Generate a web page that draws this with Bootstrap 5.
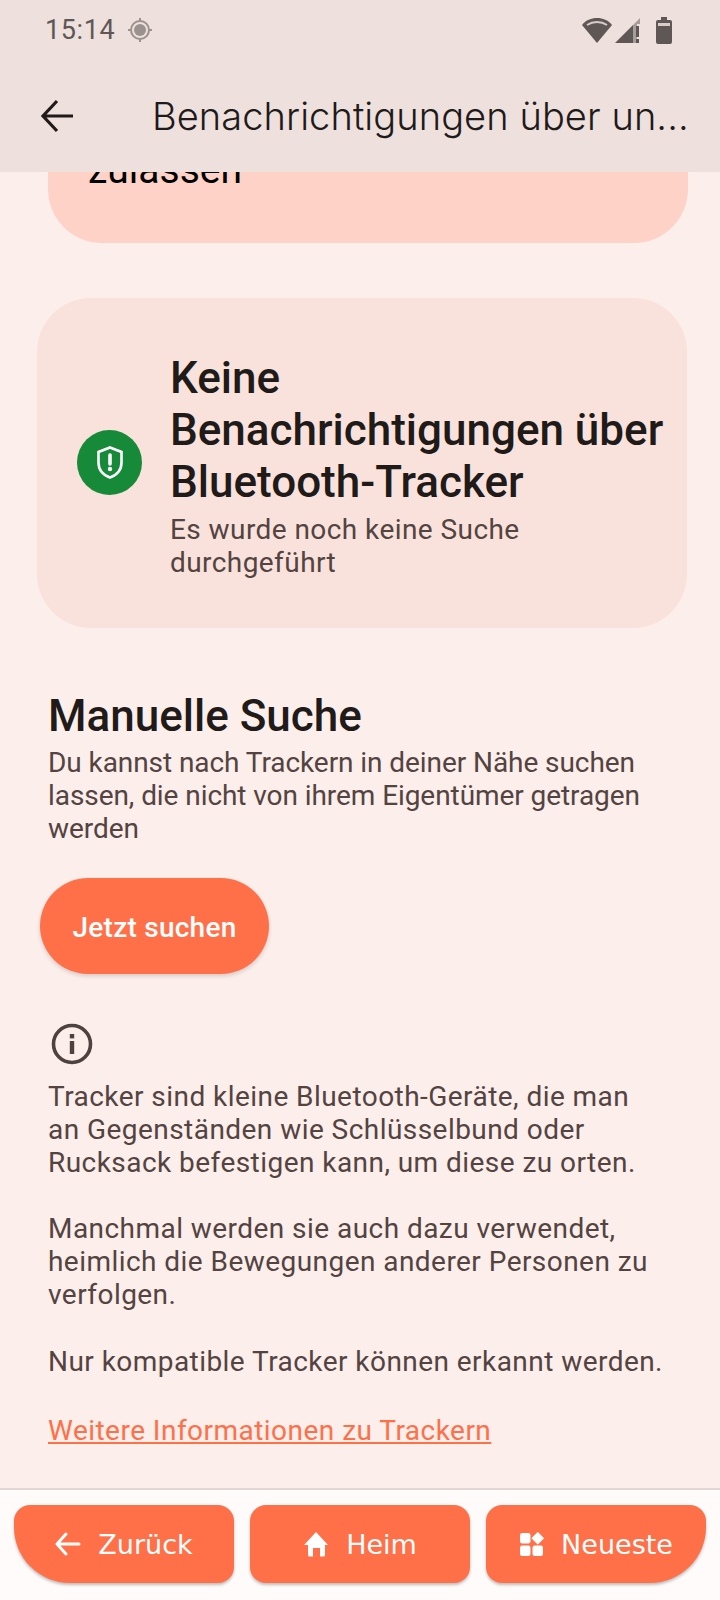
<!DOCTYPE html>
<html lang="de">
<head>
  <meta charset="UTF-8">
  <meta name="viewport" content="width=device-width, initial-scale=1.0">
  <title>Benachrichtigungen über unbekannte Tracker</title>
  <link href="https://cdn.jsdelivr.net/npm/bootstrap@5.3.0/dist/css/bootstrap.min.css" rel="stylesheet">
  <style>
    html, body { height: 1600px; overflow: hidden; }
    body { width: 720px; background: #fceeeb; font-family: Roboto, sans-serif; color: #201a19; }
    .top-bar { background: #eee0dd; height: 172px; flex: none; position: relative; z-index: 2; }
    .status-row { height: 60px; padding: 0 48px 0 45px; color: #5f5755; }
    .status-time { font-size: 27px; letter-spacing: .6px; line-height: 1; margin-right: 4px; }
    .sig-icon { margin-left: 2px; }
    .tool-row { height: 112px; padding: 0 0 0 40px; }
    .tool-title { font-family: Inter, sans-serif; font-size: 38px; font-weight: 300; letter-spacing: .08px; margin-left: 76px; white-space: nowrap; color: #201a19; }
    .scroll-area { min-height: 0; overflow: hidden; }
    .allow-card { background: #ffd2c7; margin: -60px 32px 0 48px; height: 131px; border-radius: 0 0 54px 54px; padding: 35px 0 0 40px; font-size: 39px; line-height: 46px; color: #000; }
    .state-card { background: #f9e2dc; margin: 55px 33px 0 37px; height: 330px; border-radius: 54px; padding: 0 18px 0 40px; }
    .state-icon { width: 65px; height: 65px; background: #168a38; flex: none; margin-bottom: 2px; }
    .state-title { font-size: 44px; line-height: 52px; font-weight: 500; margin: 0; color: #201a19; }
    .state-sub { font-size: 28px; line-height: 33px; letter-spacing: .43px; color: #534341; margin: 5px 0 0; }
    .state-text { margin-left: 28px; padding-top: 5px; }
    .manual-head { font-size: 44px; line-height: 52px; font-weight: 500; margin: 62px 0 4px 48px; color: #201a19; }
    .manual-text { font-size: 28px; line-height: 33px; letter-spacing: -.07px; color: #534341; margin: 0 0 0 48px; }
    .body-text { font-size: 28px; line-height: 33.1px; letter-spacing: .45px; color: #534341; margin: 0 0 0 48px; }
    .search-btn { background: #ff7049; color: #fff; border: 0; border-radius: 48px; width: 229px; height: 96px; margin: 33px 0 0 40px; padding-top: 9px; font-size: 28px; font-weight: 500; letter-spacing: .25px; box-shadow: 0 2px 4px rgba(0,0,0,.16); }
    .search-btn:hover { background: #ff7049; color: #fff; }
    .info-icon { display: block; margin: 49px 0 15px 51px; }
    .gap-para { margin-top: 33px; }
    .info-link { color: #ff7049; font-size: 28px; line-height: 33px; letter-spacing: .47px; margin: 36px 0 0 48px; display: block; }
    .bottom-bar { background: #fefbfa; border-top: 2px solid #e3d6d3; height: 112px; flex: none; padding: 15px 14px 0; gap: 16px; }
    .bottom-btn { background: #ff7049; color: #fff; border: 0; width: 220px; height: 78px; padding-left: 12px; border-radius: 16px; font-family: "DejaVu Sans", sans-serif; font-size: 27px; gap: 17px; box-shadow: 0 2px 3px rgba(0,0,0,.25); }
    .bottom-btn:hover { background: #ff7049; color: #fff; }
    .btn-label { padding-top: 3px; }
    .btn-first { border-bottom-left-radius: 56px; }
    .btn-last { border-bottom-right-radius: 56px; }
  </style>
</head>
<body class="d-flex flex-column">
  <header class="top-bar">
    <div class="status-row d-flex align-items-center">
      <span class="status-time">15:14</span>
      <svg class="ms-2" width="26" height="26" viewBox="0 0 26 26"><circle cx="13" cy="13" r="6" fill="#9b918e"/><circle cx="13" cy="13" r="9" fill="none" stroke="#9b918e" stroke-width="2"/><path d="M13 1v4M13 21v4M1 13h4M21 13h4" stroke="#9b918e" stroke-width="2"/></svg>
      <div class="ms-auto d-flex align-items-center">
        <svg width="32" height="26" viewBox="0 0 32 26"><path d="M16 26 1 8C5 3 10 1 16 1s11 2 15 7z" fill="#5f5755"/><path d="M6 8c3-2 6-3 10-3s7 1 10 3" fill="none" stroke="#eee0dd" stroke-width="2" opacity=".85"/></svg>
        <svg class="sig-icon" width="25" height="26" viewBox="0 0 25 26"><path d="M0 26 18 8v18z" fill="#5f5755"/><path d="M18 8l7-7v6h-3v19h-4z" fill="#a79d9a"/><path d="M21 9h3v11h-3zM21 22h3v4h-3z" fill="#5f5755"/></svg>
        <svg class="ms-3" width="16" height="27" viewBox="0 0 16 27"><path d="M5 0h6v3h3a2 2 0 0 1 2 2v20a2 2 0 0 1-2 2H2a2 2 0 0 1-2-2V5a2 2 0 0 1 2-2h3z" fill="#5f5755"/><rect x="2" y="6" width="12" height="3" fill="#d9ccc9"/></svg>
      </div>
    </div>
    <div class="tool-row d-flex align-items-center">
      <svg width="36" height="36" viewBox="0 0 36 36"><path d="M33 18H4M17 3 3 18l14 15" fill="none" stroke="#201a19" stroke-width="3.2"/></svg>
      <span class="tool-title">Benachrichtigungen über un...</span>
    </div>
  </header>

  <main class="scroll-area flex-grow-1">
    <div class="allow-card">zulassen</div>

    <section class="state-card d-flex align-items-center">
      <div class="state-icon rounded-circle d-flex align-items-center justify-content-center">
        <svg width="26" height="33" viewBox="0 0 26 33"><path d="M13 1.5 24.5 6v10.5c0 7-4.5 12.500-11.500 15C6 29 1.500 23.500 1.500 16.500V6z" fill="none" stroke="#fff" stroke-width="2.600"/><path d="M13 9v9" stroke="#fff" stroke-width="3.600" stroke-linecap="round"/><circle cx="13" cy="23" r="2.200" fill="#fff"/></svg>
      </div>
      <div class="state-text">
        <h2 class="state-title">Keine Benachrichtigungen über Bluetooth-Tracker</h2>
        <p class="state-sub">Es wurde noch keine Suche durchgeführt</p>
      </div>
    </section>

    <h2 class="manual-head">Manuelle Suche</h2>
    <p class="manual-text">Du kannst nach Trackern in deiner Nähe suchen<br>lassen, die nicht von ihrem Eigentümer getragen<br>werden</p>
    <button type="button" class="btn search-btn">Jetzt suchen</button>

    <svg class="info-icon" width="42" height="42" viewBox="0 0 42 42"><circle cx="21" cy="21" r="18.500" fill="none" stroke="#4d4240" stroke-width="3.600"/><rect x="18.800" y="18" width="4.400" height="13" fill="#4d4240"/><rect x="18.800" y="11" width="4.400" height="4.400" fill="#4d4240"/></svg>
    <p class="body-text">Tracker sind kleine Bluetooth-Geräte, die man<br>an Gegenständen wie Schlüsselbund oder<br>Rucksack befestigen kann, um diese zu orten.</p>
    <p class="body-text gap-para">Manchmal werden sie auch dazu verwendet,<br>heimlich die Bewegungen anderer Personen zu<br>verfolgen.</p>
    <p class="body-text gap-para">Nur kompatible Tracker können erkannt werden.</p>
    <a class="info-link" href="#">Weitere Informationen zu Trackern</a>
  </main>

  <nav class="bottom-bar d-flex">
    <button type="button" class="btn bottom-btn btn-first d-flex align-items-center justify-content-center">
      <svg width="26" height="24" viewBox="0 0 26 24"><path d="M24 12H3M11 2 2 12l9 10" fill="none" stroke="#fff" stroke-width="3" stroke-linecap="round" stroke-linejoin="round"/></svg><span class="btn-label">Zurück</span></button>
    <button type="button" class="btn bottom-btn d-flex align-items-center justify-content-center">
      <svg width="26" height="26" viewBox="0 0 26 26"><path d="M13 1 25 14h-3v10a1.500 1.500 0 0 1-1.500 1.500H17V17H10v8.500H6.500A1.500 1.500 0 0 1 5 24V14H1z" fill="#fff"/></svg><span class="btn-label">Heim</span></button>
    <button type="button" class="btn bottom-btn btn-last d-flex align-items-center justify-content-center">
      <svg width="25" height="25" viewBox="0 0 24 24"><rect x="1" y="1" width="10" height="10" rx="2" fill="#fff"/><path d="M18 .5 23.500 6 18 11.500 12.500 6z" fill="#fff" stroke="#fff" stroke-linejoin="round"/><rect x="1" y="13" width="10" height="10" rx="2" fill="#fff"/><rect x="13" y="13" width="10" height="10" rx="2" fill="#fff"/></svg><span class="btn-label">Neueste</span></button>
  </nav>

  <script src="https://cdn.jsdelivr.net/npm/bootstrap@5.3.0/dist/js/bootstrap.bundle.min.js"></script>
</body>
</html>
